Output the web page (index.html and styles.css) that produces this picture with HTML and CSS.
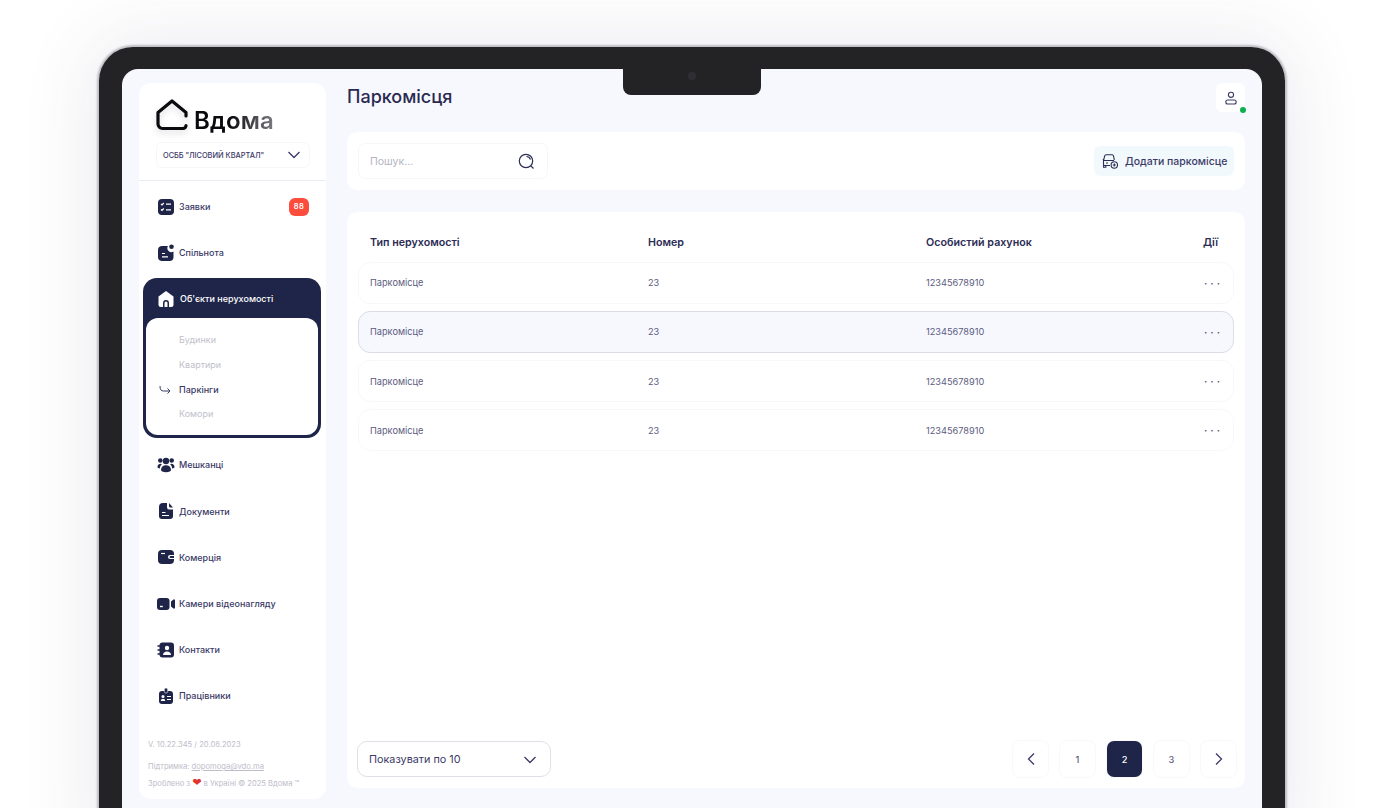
FILE: index.html
```html
<!DOCTYPE html>
<html lang="uk">
<head>
  <meta charset="UTF-8">
  <meta name="viewport" content="width=device-width, initial-scale=1.0">
  <title>Паркомісця</title>
  <link rel="stylesheet" href="styles.css">
</head>
<body>

<div class="frame">
  <div class="notch"><span class="camera"></span></div>
  <div class="screen">

    <aside class="sidebar">
      <div class="brand">
        <div class="logo">
          <svg class="logo-house" width="32" height="32" viewBox="0 0 32 32" fill="none">
            <path d="M30 17V13.500L16 2 2 13.500V25a4.500 4.500 0 0 0 4.500 4.500H27a3 3 0 0 0 3-3" stroke="#0b0b0f" stroke-width="3.200" stroke-linejoin="round" stroke-linecap="round"/>
          </svg>
          <span class="logo-text">Вдома</span>
        </div>
        <div class="org-select">
          <span>ОСББ "ЛІСОВИЙ КВАРТАЛ"</span>
          <svg width="14" height="14" viewBox="0 0 14 14" fill="none"><path d="M1.500 4l5.500 5.500L12.500 4" stroke="#3b3a66" stroke-width="1.300"/></svg>
        </div>
      </div>

      <nav class="nav">
        <a class="nav-item">
          <svg class="ico" viewBox="0 0 18 18"><rect x="1" y="1" width="16" height="16" rx="4" fill="#1e2548"/><path d="M4 6l1 1 1.800-2M4 11.500l1 1 1.800-2M9 6.200h5M9 11.800h5" stroke="#fff" stroke-width="1.200" fill="none"/></svg>
          <span>Заявки</span>
          <b class="badge">88</b>
        </a>
        <a class="nav-item">
          <svg class="ico" viewBox="0 0 18 18"><path d="M4.500 2h6.500a4 4 0 0 0 5.500 5.500V13a4 4 0 0 1-4 4h-8a4 4 0 0 1-3.500-4V6a4 4 0 0 1 3.500-4z" fill="#1e2548"/><circle cx="14.500" cy="2.800" r="2.300" fill="#1e2548"/><path d="M5 9.500h3M5 12.800h6" stroke="#fff" stroke-width="1.200"/></svg>
          <span>Спільнота</span>
        </a>

        <div class="nav-group">
          <a class="nav-item active">
            <svg class="ico" viewBox="0 0 18 18"><path d="M9 1l7.500 5.500v8a2.500 2.500 0 0 1-2.500 2.500H4a2.500 2.500 0 0 1-2.500-2.500v-8z" fill="#fff"/><path d="M6 17v-4a3 3 0 0 1 6 0v4h-1.500v-4a1.500 1.500 0 0 0-3 0v4z" fill="#1e2548"/></svg>
            <span>Об'єкти нерухомості</span>
          </a>
          <ul class="subnav">
            <li>Будинки</li>
            <li>Квартири</li>
            <li class="current">
              <svg width="12" height="10" viewBox="0 0 12 10" fill="none"><path d="M1 1c0 3.500 1 5 3.500 5H11M8.500 3.500L11 6 8.500 8.500" stroke="#3b3a66" stroke-width="1"/></svg>
              Паркінги
            </li>
            <li>Комори</li>
          </ul>
        </div>

        <a class="nav-item">
          <svg class="ico" viewBox="0 0 18 18" fill="#1e2548"><circle cx="9" cy="5" r="3.200"/><circle cx="3.300" cy="4.500" r="2.300"/><circle cx="14.700" cy="4.500" r="2.300"/><path d="M4 14c0-3 2-4.800 5-4.800s5 1.800 5 4.800c0 1.400-2 2.200-5 2.200s-5-.8-5-2.200z"/><path d="M0.500 11c0-2 1-3.300 3.500-3.300l.8.700C3.500 9.500 3 10.500 2.800 12.500 1.500 12.400.5 12 .5 11zM17.500 11c0-2-1-3.300-3.500-3.300l-.8.700c1.300 1.100 1.800 2.100 2 4.100 1.300-.1 2.300-.5 2.300-1.500z"/></svg>
          <span>Мешканці</span>
        </a>
        <a class="nav-item">
          <svg class="ico" viewBox="0 0 18 18"><path d="M6 1h4v4a2.500 2.500 0 0 0 2.500 2.500H16V14a3 3 0 0 1-3 3H5a3 3 0 0 1-3-3V5a4 4 0 0 1 4-4z" fill="#1e2548"/><path d="M12 1l4 4.500h-2.500A1.500 1.500 0 0 1 12 4z" fill="#1e2548"/><path d="M5 10.500h3.500M5 13.500h7" stroke="#fff" stroke-width="1.200"/></svg>
          <span>Документи</span>
        </a>
        <a class="nav-item">
          <svg class="ico" viewBox="0 0 18 18"><rect x="1" y="2" width="16" height="14" rx="4" fill="#1e2548"/><path d="M4 5.500h4" stroke="#fff" stroke-width="1.200"/><path d="M17 7h-4a2 2 0 0 0 0 4h4" fill="#fff"/><path d="M17 8h-3.500a1 1 0 0 0 0 2H17z" fill="#1e2548"/></svg>
          <span>Комерція</span>
        </a>
        <a class="nav-item">
          <svg class="ico" viewBox="0 0 18 18" fill="#1e2548"><rect x="0" y="3" width="12.500" height="12" rx="3"/><path d="M14 6.500l2.500-2a1 1 0 0 1 1.500 1v7a1 1 0 0 1-1.500 1l-2.500-2z"/><rect x="3" y="10.800" width="2.800" height="1.400" fill="#fff"/></svg>
          <span>Камери відеонагляду</span>
        </a>
        <a class="nav-item">
          <svg class="ico" viewBox="0 0 18 18"><rect x="2.500" y="1.500" width="14.500" height="15" rx="3" fill="#1e2548"/><path d="M0.500 5h3.500M0.500 9h3.500M0.500 13h3.500" stroke="#1e2548" stroke-width="1.300"/><circle cx="10" cy="7" r="2.200" fill="#fff"/><path d="M6 14c0-2.200 1.800-3.500 4-3.500s4 1.300 4 3.500z" fill="#fff"/></svg>
          <span>Контакти</span>
        </a>
        <a class="nav-item">
          <svg class="ico" viewBox="0 0 18 18"><rect x="2" y="4" width="14" height="13" rx="3" fill="#1e2548"/><rect x="7.300" y="1" width="3.400" height="5" rx="1.500" fill="#1e2548" stroke="#fff" stroke-width=".6"/><circle cx="6" cy="9.500" r="1.500" fill="#fff"/><path d="M3.800 14c0-1.500 1-2.300 2.200-2.300s2.200.8 2.200 2.300z" fill="#fff"/><path d="M10 9.500h4M10 12.500h4" stroke="#fff" stroke-width="1.200"/></svg>
          <span>Працівники</span>
        </a>
      </nav>

      <footer class="side-footer">
        <p class="version">V. 10.22.345 / 20.08.2023</p>
        <p class="support">Підтримка: <u>dopomoga@vdo.ma</u></p>
        <p>Зроблено з <span class="heart">❤</span> в Україні © 2025 Вдома ™</p>
      </footer>
    </aside>

    <main class="main">
      <header class="topbar">
        <h1>Паркомісця</h1>
        <div class="avatar">
          <svg width="14" height="14" viewBox="0 0 14 14" fill="none" stroke="#3b3a66" stroke-width="1.100"><circle cx="7" cy="3.800" r="2.600"/><rect x="1.800" y="9" width="10.400" height="4" rx="2"/></svg>
          <span class="online"></span>
        </div>
      </header>

      <section class="card toolbar">
        <div class="search">
          <span>Пошук...</span>
          <svg width="17" height="17" viewBox="0 0 17 17" fill="none" stroke="#2c2c55" stroke-width="1.200"><circle cx="8" cy="8" r="6.700"/><path d="M12.800 12.800l2.700 2.700M8.500 3.500a4.500 4.500 0 0 1 4 3"/></svg>
        </div>
        <button class="add-btn">
          <svg width="16" height="16" viewBox="0 0 16 16" fill="none" stroke="#2c2c55" stroke-width="1.100"><path d="M8 12.500H2.500a1 1 0 0 1-1-1V7.500l1.200-4.700a1.500 1.500 0 0 1 1.400-1.100h6a1.500 1.500 0 0 1 1.400 1.100L12.300 7M.8 6.500h1M1.500 7.500h10.500M4 10h2M1.500 12.500v1.800h2.300v-1.800"/><circle cx="12.300" cy="12" r="3.200"/><path d="M10.800 12h3M12.300 10.500v3"/></svg>
          Додати паркомісце
        </button>
      </section>

      <section class="card table-card">
        <div class="table-head">
          <span>Тип нерухомості</span>
          <span>Номер</span>
          <span>Особистий рахунок</span>
          <span class="col-actions">Дії</span>
        </div>
        <div class="table-row">
          <span>Паркомісце</span><span>23</span><span>12345678910</span><span class="dots">···</span>
        </div>
        <div class="table-row hovered">
          <span>Паркомісце</span><span>23</span><span>12345678910</span><span class="dots">···</span>
        </div>
        <div class="table-row">
          <span>Паркомісце</span><span>23</span><span>12345678910</span><span class="dots">···</span>
        </div>
        <div class="table-row">
          <span>Паркомісце</span><span>23</span><span>12345678910</span><span class="dots">···</span>
        </div>

        <div class="table-footer">
          <div class="per-page">
            <span>Показувати по 10</span>
            <svg width="14" height="14" viewBox="0 0 14 14" fill="none"><path d="M1.500 4l5.500 5.500L12.500 4" stroke="#3b3a66" stroke-width="1.300"/></svg>
          </div>
          <div class="pager">
            <a class="page"><svg width="10" height="14" viewBox="0 0 10 14" fill="none"><path d="M8 1.500L2.500 7 8 12.500" stroke="#3b3a66" stroke-width="1.300"/></svg></a>
            <a class="page">1</a>
            <a class="page current">2</a>
            <a class="page">3</a>
            <a class="page"><svg width="10" height="14" viewBox="0 0 10 14" fill="none"><path d="M2 1.500L7.500 7 2 12.500" stroke="#3b3a66" stroke-width="1.300"/></svg></a>
          </div>
        </div>
      </section>
    </main>

  </div>
</div>

</body>
</html>
```

FILE: styles.css
```css
html, body {
  height: 808px;
  overflow: hidden;
}

body {
  margin: 0;
  background: #fff;
  font-family: Inter, "Noto Sans", sans-serif;
  color: #2c2c55;
}

.frame {
  position: relative;
  box-sizing: border-box;
  width: 1186px;
  height: 800px;
  margin: 47px 0 0 99px;
  padding: 22px 23px 0;
  background: #232225;
  border-radius: 34px 34px 0 0;
  box-shadow: 0 0 2px 2px #bdbdc2, 0 0 70px 10px rgba(70, 60, 100, 0.1);
}

.notch {
  position: absolute;
  top: 20px;
  left: 524px;
  display: flex;
  justify-content: center;
  width: 138px;
  height: 28px;
  background: #232225;
  border-radius: 0 0 8px 8px;
}

.camera {
  width: 8px;
  height: 8px;
  margin-top: 5px;
  background: #2f2f33;
  border-radius: 50%;
}

.screen {
  display: flex;
  gap: 21px;
  box-sizing: border-box;
  height: 778px;
  padding: 14px 17px 0;
  background: #f7f8fe;
  border-radius: 16px 16px 0 0;
}

/* sidebar */

.sidebar {
  display: flex;
  flex-direction: column;
  flex: 0 0 187px;
  height: 716px;
  background: #fff;
  border-radius: 12px;
}

.brand {
  height: 98px;
  padding: 16px 17px 0 18px;
  box-sizing: border-box;
  border-bottom: 1px solid #ebebf2;
}

.logo {
  display: flex;
  align-items: flex-end;
  gap: 6px;
  height: 33px;
}

.logo-house {
  flex: none;
  width: 32px;
  height: 32px;
  margin: 0 0 1px -1px;
  filter: drop-shadow(0 3px 3px rgba(0, 0, 0, 0.15));
}

.logo-text {
  margin-bottom: -4px;
  font-size: 24px;
  line-height: 30px;
  font-weight: 600;
  letter-spacing: 0.2px;
  background: linear-gradient(90deg, #0b0b0f 45%, #7c7c80 100%);
  -webkit-background-clip: text;
  background-clip: text;
  color: transparent;
}

.org-select {
  display: flex;
  align-items: center;
  justify-content: space-between;
  height: 24px;
  margin-top: 11px;
  padding: 0 8px 0 6px;
  border-radius: 5px;
  box-shadow: 0 0 0 1px #f7f7fb;
  font-size: 7.400px;
  font-weight: 500;
  color: #3b3a66;
}

.nav {
  padding-top: 2.500px;
}

.nav-item {
  display: flex;
  align-items: center;
  gap: 4px;
  height: 46.200px;
  padding: 0 17px 0 18px;
  font-size: 9px;
  font-weight: 500;
  color: #3b3a66;
}

.ico {
  flex: none;
  width: 18px;
  height: 18px;
}

.badge {
  display: block;
  width: 20px;
  margin-left: auto;
  line-height: 18px;
  text-align: center;
  background: #fb4c3c;
  border-radius: 6px;
  font-size: 7.500px;
  font-weight: 600;
  letter-spacing: 0.5px;
  color: #fff;
}

.nav-group {
  margin: 2.500px 5px 3.500px 4px;
  padding: 0 3px 3px;
  background: #1e2548;
  border-radius: 14px;
}

.nav-item.active {
  gap: 5px;
  box-sizing: border-box;
  height: 40px;
  padding: 1px 0 0 11px;
  color: #fff;
}

.subnav {
  margin: 0;
  padding: 10px 0 9px 33px;
  height: 117px;
  box-sizing: border-box;
  list-style: none;
  background: #fff;
  border-radius: 12px;
  font-size: 9px;
  color: #c0c0ca;
}

.subnav li {
  position: relative;
  height: 24.600px;
  line-height: 24.600px;
}

.subnav .current {
  color: #3b3a66;
  font-weight: 500;
}

.subnav .current svg {
  position: absolute;
  left: -20px;
  top: 7px;
}

.side-footer {
  margin-top: auto;
  padding: 0 9px 10px;
  font-size: 7.600px;
  color: #bdbdc9;
}

.side-footer p {
  margin: 0;
  line-height: 10px;
}

.side-footer .version {
  margin-bottom: 12px;
}

.side-footer .support {
  margin-bottom: 7px;
}

.heart {
  color: #e0352b;
  font-size: 11px;
  line-height: 8px;
  font-family: "DejaVu Sans", sans-serif;
}

/* main */

.main {
  flex: 1;
  min-width: 0;
}

.topbar {
  display: flex;
  align-items: flex-start;
  justify-content: space-between;
  height: 49px;
}

h1 {
  margin: 0;
  font-size: 18px;
  line-height: 28px;
  font-weight: 500;
  color: #2a2a50;
}

.avatar {
  position: relative;
  display: flex;
  align-items: center;
  justify-content: center;
  width: 29px;
  height: 29px;
  background: #fff;
  border-radius: 6px;
}

.online {
  position: absolute;
  right: -1px;
  bottom: -1px;
  width: 6px;
  height: 6px;
  background: #0cb14b;
  border-radius: 50%;
}

.card {
  background: #fff;
  border-radius: 10px;
}

.toolbar {
  display: flex;
  align-items: center;
  justify-content: space-between;
  height: 58px;
  padding: 0 11px 0 12px;
}

.search {
  display: flex;
  align-items: center;
  justify-content: space-between;
  box-sizing: border-box;
  width: 188px;
  height: 34px;
  padding: 0 12px 0 11px;
  border-radius: 6px;
  box-shadow: 0 0 0 1px #f7f7fb;
  font-size: 10.500px;
  color: #b4b4c2;
}

.add-btn {
  display: flex;
  align-items: center;
  gap: 7px;
  width: 140px;
  height: 30px;
  padding: 0 0 0 8px;
  border: none;
  background: #f2f9fd;
  border-radius: 6px;
  font-family: inherit;
  font-size: 10.500px;
  font-weight: 500;
  white-space: nowrap;
  color: #3b3a66;
}

.table-card {
  display: flex;
  flex-direction: column;
  height: 576px;
  margin-top: 22px;
  padding: 0 11px;
  box-sizing: border-box;
}

.table-head,
.table-row {
  display: grid;
  grid-template-columns: 278px 278px 1fr auto;
  align-items: center;
  padding: 0 16px 0 12px;
}

.table-head {
  box-sizing: border-box;
  height: 49.500px;
  padding-top: 11px;
  font-size: 10.700px;
  font-weight: 600;
  color: #2c2c55;
}

.table-row {
  box-sizing: border-box;
  height: 42px;
  margin-bottom: 7.300px;
  border: 1px solid #f8f8fb;
  border-radius: 12px;
  padding: 0 10px 0 11px;
  font-size: 9.200px;
  color: #5c5c7e;
}

.table-row.hovered {
  background: #f7f8fe;
  border-color: #dcdce8;
}

.dots {
  font-size: 10px;
  font-weight: 700;
  letter-spacing: 3px;
  line-height: 10px;
  color: #5c5c7e;
}

.table-footer {
  display: flex;
  align-items: center;
  justify-content: space-between;
  margin: auto -2px 11px -1px;
}

.per-page {
  display: flex;
  align-items: center;
  justify-content: space-between;
  box-sizing: border-box;
  width: 194px;
  height: 36px;
  padding: 1px 13px 0 11px;
  border: 1px solid #dfdfe8;
  border-radius: 10px;
  font-size: 10.800px;
  color: #3b3a66;
}

.pager {
  display: flex;
  gap: 12px;
}

.page {
  display: flex;
  align-items: center;
  justify-content: center;
  width: 35px;
  height: 36px;
  border-radius: 7px;
  box-shadow: 0 0 0 1px #f9f9fc;
  font-size: 9.200px;
  font-weight: 500;
  color: #5c5c7e;
}

.page.current {
  background: #1e2548;
  color: #fff;
}
```
